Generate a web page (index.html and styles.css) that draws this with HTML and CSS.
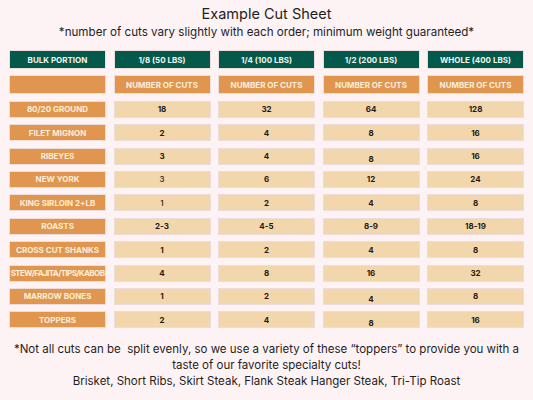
FILE: index.html
```html
<!DOCTYPE html>
<html>
<head>
<meta charset="utf-8">
<link rel="stylesheet" href="styles.css">
</head>
<body>
<div class="page">
  <h1 class="title">Example Cut Sheet</h1>
  <p class="subtitle">*number of cuts vary slightly with each order; minimum weight guaranteed*</p>
  <div class="table">
    <div class="cell head">BULK PORTION</div>
    <div class="cell head">1/8 (50 LBS)</div>
    <div class="cell head">1/4 (100 LBS)</div>
    <div class="cell head">1/2 (200 LBS)</div>
    <div class="cell head">WHOLE (400 LBS)</div>

    <div class="cell sub"></div>
    <div class="cell sub">NUMBER OF CUTS</div>
    <div class="cell sub">NUMBER OF CUTS</div>
    <div class="cell sub">NUMBER OF CUTS</div>
    <div class="cell sub">NUMBER OF CUTS</div>

    <div class="cell label">80/20 GROUND</div>
    <div class="cell num">18</div><div class="cell num">32</div><div class="cell num">64</div><div class="cell num">128</div>

    <div class="cell label">FILET MIGNON</div>
    <div class="cell num">2</div><div class="cell num">4</div><div class="cell num">8</div><div class="cell num">16</div>

    <div class="cell label">RIBEYES</div>
    <div class="cell num">3</div><div class="cell num">4</div><div class="cell num low">8</div><div class="cell num">16</div>

    <div class="cell label">NEW YORK</div>
    <div class="cell num light">3</div><div class="cell num">6</div><div class="cell num">12</div><div class="cell num">24</div>

    <div class="cell label">KING SIRLOIN 2+LB</div>
    <div class="cell num light">1</div><div class="cell num">2</div><div class="cell num">4</div><div class="cell num">8</div>

    <div class="cell label">ROASTS</div>
    <div class="cell num">2-3</div><div class="cell num">4-5</div><div class="cell num">8-9</div><div class="cell num">18-19</div>

    <div class="cell label">CROSS CUT SHANKS</div>
    <div class="cell num">1</div><div class="cell num">2</div><div class="cell num">4</div><div class="cell num">8</div>

    <div class="cell label tight">STEW/FAJITA/TIPS/KABOB</div>
    <div class="cell num">4</div><div class="cell num">8</div><div class="cell num">16</div><div class="cell num">32</div>

    <div class="cell label">MARROW BONES</div>
    <div class="cell num">1</div><div class="cell num">2</div><div class="cell num low">4</div><div class="cell num">8</div>

    <div class="cell label">TOPPERS</div>
    <div class="cell num">2</div><div class="cell num">4</div><div class="cell num low">8</div><div class="cell num">16</div>
  </div>
  <div class="footer">
    <p>*Not all cuts can be&nbsp; split evenly, so we use a variety of these “toppers” to provide you with a<br>taste of our favorite specialty cuts!</p>
    <p>Brisket, Short Ribs, Skirt Steak, Flank Steak Hanger Steak, Tri-Tip Roast</p>
  </div>
</div>
</body>
</html>
```

FILE: styles.css
```css
html, body {
  margin: 0;
  padding: 0;
  background: #fdf2f4;
}
.page {
  width: 533px;
  height: 400px;
  font-family: "Inter", "Liberation Sans", sans-serif;
  color: #1f1f1f;
}
.title {
  margin: 0;
  padding-top: 4px;
  font-size: 14.5px;
  font-weight: 400;
  line-height: 20px;
  text-align: center;
}
.subtitle {
  margin: 0;
  font-size: 11.6px;
  line-height: 16px;
  text-align: center;
}
.table {
  margin: 10px 0 0 9px;
  display: grid;
  grid-template-columns: repeat(5, 97px);
  grid-template-rows: 19px 19px repeat(10, 17px);
  column-gap: 7.5px;
  row-gap: 6.4px;
}
.cell {
  box-sizing: border-box;
  border: 1px solid #ecdcdc;
  display: flex;
  align-items: center;
  justify-content: center;
  font-size: 8px;
  font-weight: 700;
  white-space: nowrap;
}
.head {
  background: #04594b;
  color: #f4f4f0;
}
.sub, .label {
  background: #e0964f;
  color: #fbeedd;
}
.tight {
  letter-spacing: -0.6px;
}
.num {
  background: #f3d7ac;
  color: #1d1a16;
}
.low {
  padding-top: 6px;
}
.light {
  font-weight: 500;
}
.footer {
  margin-top: 13px;
  text-align: center;
  font-size: 11.5px;
  line-height: 16px;
}
.footer p {
  margin: 0;
}
```
